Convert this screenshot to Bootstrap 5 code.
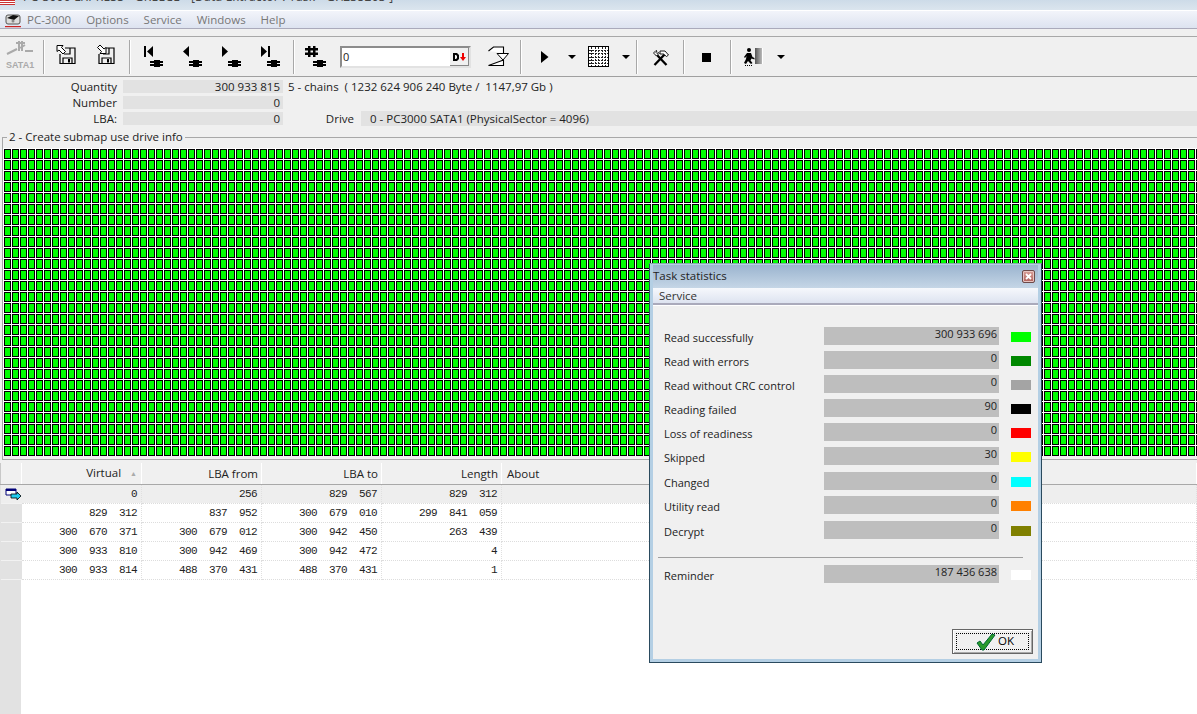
<!DOCTYPE html>
<html lang="en">
<head>
<meta charset="utf-8">
<title>PC-3000</title>
<link rel="stylesheet" href="https://cdn.jsdelivr.net/npm/bootstrap@5.3.0/dist/css/bootstrap.min.css">
<style>
html,body{height:100%;}
body{width:1197px;height:714px;overflow:hidden;background:#f0f0f0;color:#222;font:11px/14px "Open Sans",sans-serif;position:relative;}
.wtitle{height:10px;background:linear-gradient(#cddbe8,#dbe5ee);overflow:hidden;white-space:nowrap;color:#444;font-size:12px;}
.wtitle svg{flex:none;}
.wtitle span{display:block;margin-top:-10px;padding-left:8px;letter-spacing:.25px;}
.wedge{height:1px;background:#fff;}
.wmenu{height:18px;padding-left:5px;background:linear-gradient(#f2f4fa,#dde3f0);color:#777;border-bottom:1px solid #aab;font-size:11.5px;}
.wmenu svg{margin-right:6px;flex:none;}
.mi{margin-right:15px;}
.wgap{height:8px;border-bottom:1px solid #a8a8a8;}
.tbar{height:40px;padding-top:3px;border-bottom:1px solid #a0a0a0;}
.tbar .ico{flex:none;display:block;height:34px;}
.tsep{width:2px;height:34px;background:#a8a8a8;border-right:1px solid #fff;flex:none;}
.g5{margin-left:5px}.g6{margin-left:6px}.g8{margin-left:8px}.g10{margin-left:10px}.g11{margin-left:11px}.g12{margin-left:12px}.g13{margin-left:13px}.g14{margin-left:14px}.g15{margin-left:15px}.g17{margin-left:17px}.g18{margin-left:18px}.g19{margin-left:19px}
.numbox{width:131px;height:22px;margin-top:6px;background:#fff;border:2px solid #8c8c8c;border-right-color:#e2e2e2;border-bottom-color:#e2e2e2;font:11px/18px "Open Sans",sans-serif;padding-left:1px;flex:none;}
.numbtn{width:19px;height:18px;background:#f0f0f0;border-right:1px solid #888;border-bottom:1px solid #888;}
.ibox{height:55px;padding-top:2px;}
.irow{height:16px;}
.ilab{width:117px;text-align:right;margin-right:6px;line-height:16px;font-size:11.5px;}
.ival{width:160px;height:13px;margin-top:1px;background:#e2e2e2;text-align:right;padding-right:3px;line-height:13px;font-size:11.5px;}
.ichain{margin-left:5px;line-height:16px;white-space:pre;font-size:11.5px;}
.idrive{width:71px;text-align:right;line-height:15px;font-size:11.5px;}
.dval{flex:1;height:15px;margin-left:7px;background:#e2e2e2;padding-left:9px;line-height:15px;white-space:pre;font-size:11.5px;}
.gbox{height:323px;margin:5px 0 0 2px;border:1px solid #a8a8a8;border-right:0;position:relative;padding:10px 0 0 0;}
.gleg{position:absolute;left:4px;top:-8px;background:#f0f0f0;padding:0 2px;line-height:14px;font-size:11.5px;}
.cells{height:308px;background-color:#0f0;background-image:linear-gradient(90deg,#fff 1px,transparent 1px),linear-gradient(#fff 1px,transparent 1px),linear-gradient(90deg,#000 2px,transparent 2px,transparent 7px,#000 7px),linear-gradient(#000 2px,transparent 2px,transparent 10px,#000 10px);background-size:8px 11px;margin-top:0;}
.gridwrap{height:251px;margin-top:3px;background:#fff;position:relative;overflow:hidden;}
.gridwrap::before{content:"";position:absolute;left:0;top:0;bottom:0;width:21px;background:#e2e2e2;}
.dtab{width:1197px;table-layout:fixed;border-collapse:collapse;position:relative;}
.c0{width:21px}.cn{width:120px}
.dtab th{height:21px;padding:0 3px 0 0;background:#f0f0f0;font-weight:400;font-size:11.5px;text-align:right;border-right:1px solid #fff;border-left:1px solid #c8c8c8;border-bottom:1px solid #a8a8a8;line-height:19px;}
.dtab th.lft{text-align:left;padding-left:5px;}
.dtab td{height:19px;padding:0 4px 0 0;text-align:right;font:11px/18px "Liberation Mono",monospace;letter-spacing:-.6px;white-space:pre;border-right:1px dotted #e0e0e0;border-bottom:1px dotted #ddd;color:#222;}
.dtab td.rh{background:#e2e2e2;border-bottom:1px solid #f2f2f2;border-right:0;padding:0;}
.dtab tr.cur td{background:#eee;}
.arrowsort{color:#aaa;font-size:7px;margin:0 1px 0 9px;vertical-align:1px;}
.tstat{position:absolute;left:649px;top:263px;width:393px;height:400px;background:#f0f0f0;border:1px solid #2a4a5e;border-top-color:#8aa;box-shadow:inset 0 0 0 3px #b4cfe4;padding:0 4px 4px;}
.thead{height:23px;margin:1px -1px 0 -1px;background:linear-gradient(#9bb4cf,#c5d6e6);padding:3px 0 0 0;position:relative;line-height:16px;font-size:11.5px;}
.xbtn{position:absolute;right:3px;top:5px;width:13px;height:13px;background:linear-gradient(#d9a09a,#b0605a);border:1px solid #6d4a4a;border-radius:2px;box-shadow:inset 0 0 0 1px #e6c4c0;display:flex;}
.tmenu{height:17px;margin:0 -1px;padding-left:6px;background:linear-gradient(#f6f8fc,#dde3f0);line-height:15px;border-bottom:2px solid #aab;color:#333;box-shadow:0 1px 0 #fff;font-size:11.5px;}
.tbody{padding:22px 0 0 10px;height:calc(100% - 40px);position:relative;}
.strow{height:18px;margin-bottom:6px;}
.strow.wide{margin-bottom:7px;}
.slab{width:160px;line-height:14px;padding-top:4px;flex:none;}
.sval{width:175px;height:18px;background:#bebebe;text-align:right;padding-right:2px;line-height:14px;flex:none;}
.swat{width:20px;height:10px;margin-left:12px;margin-top:5px;flex:none;}
.shr{height:1px;background:#a0a0a0;margin:18px 14px 7px -6px;}
.okb{position:absolute;right:4px;bottom:5px;width:81px;height:25px;background:#f0f0f0;border:1px solid #666;box-shadow:inset 1px 1px 0 #fff,inset -1px -1px 0 #aaa;font:11.5px/20px "Open Sans",sans-serif;}
.okb i{display:block;position:absolute;inset:3px;border:1px dotted #000;}
.okb svg{position:absolute;left:23px;top:3px;}
.okb span{position:absolute;left:45px;top:1px;}
</style>
</head>
<body>
<svg width="0" height="0" class="d-block position-absolute"><defs>
<g id="lines"><rect x="7" y="21" width="13" height="2"/><rect x="7" y="24" width="13" height="2"/><rect x="11" y="20" width="6" height="7"/></g>
<linearGradient id="rg"><stop offset="0" stop-color="#555"/><stop offset="1" stop-color="#bbb"/></linearGradient>
</defs></svg>
<div class="wtitle d-flex"><svg width="15" height="10" viewBox="0 0 15 10"><rect width="15" height="5" fill="#c33"/><path d="M0 1.5h15M0 3.5h15" stroke="#fff"/></svg><span>PC-3000 EXPRESS - GREECE - [Data Extractor : Task - G:\235203 ]</span></div>
<div class="wedge"></div>
<nav class="wmenu d-flex align-items-center">
<svg width="16" height="16" viewBox="0 0 16 16"><rect x="1" y="3" width="14" height="9" rx="2" fill="#ddd" stroke="#555"/><path d="M2 6l6-3 6 1-5 4z" fill="#111"/><circle cx="8" cy="9" r="1.5" fill="#888"/><rect y="14" width="16" height="1.2" fill="#c22"/></svg>
<span class="mi">PC-3000</span><span class="mi">Options</span><span class="mi">Service</span><span class="mi">Windows</span><span class="mi">Help</span>
</nav>
<div class="wgap"></div>
<div class="tbar d-flex align-items-start">
<svg class="ico g5" width="30" viewBox="0 0 30 34"><path d="M2 14L12 9M15 8L20 5" stroke="#aaa" stroke-width="2" fill="none"/><path d="M14 1v10M17 1v10M11 3h9M20 11h8" stroke="#aaa" stroke-width="2" fill="none"/><text x="1" y="28" font-family="Liberation Sans" font-weight="700" font-size="9" fill="#aaa">SATA1</text></svg>
<div class="tsep g8"></div>
<svg class="ico g11" width="20" viewBox="0 0 20 34"><g fill="none" stroke="#000" stroke-width="1.2"><path d="M4 14v9.500h15V8H9M7 23v-5h9v5M8 14h6V8.500"/></g><rect x="12" y="19" width="2" height="3.500"/><path d="M1 5.500h6l-1.500 2 4 4-2.500 2.500-4-4L1 11.500z" fill="#fff" stroke="#000"/></svg>
<svg class="ico g19" width="20" viewBox="0 0 20 34"><g fill="none" stroke="#000" stroke-width="1.2"><path d="M4 14v9.500h15V8H11M7 23v-5h9v5M8 14h6V8.500"/></g><rect x="12" y="19" width="2" height="3.500"/><path d="M11 13.500H5l1.500-2-4-4L5 5l4 4 2-1.500z" fill="#fff" stroke="#000"/></svg>
<div class="tsep g14"></div>
<svg class="ico g12" width="21" viewBox="0 0 21 34"><path d="M1 6h2v11H1zM10 6v11L4 11.500z"/><use href="#lines"/></svg>
<svg class="ico g18" width="21" viewBox="0 0 21 34"><path d="M7 6v11L1 11.500z"/><use href="#lines"/></svg>
<svg class="ico g18" width="21" viewBox="0 0 21 34"><path d="M1 6v11l6-5.500z"/><use href="#lines"/></svg>
<svg class="ico g18" width="21" viewBox="0 0 21 34"><path d="M1 6v11l6-5.500zM8 6h2v11H8z"/><use href="#lines"/></svg>
<div class="tsep g12"></div>
<svg class="ico g10" width="21" viewBox="0 0 21 34"><path d="M3 6h2.500v11H3zM8 6h2.500v11H8zM0 8h13v2.500H0zM0 12.500h13V15H0z"/><g transform="translate(1)"><use href="#lines"/></g></svg>
<div class="numbox g14 d-flex justify-content-between"><span>0</span><span class="numbtn d-flex align-items-center justify-content-center"><svg width="15" height="10" viewBox="0 0 15 10"><path fill-rule="evenodd" d="M1 1h4l2 2v4L5 9H1zM3 3v4h1l1-1V4L4 3z"/><path d="M10 1h2v4h2l-3 4-3-4h2z" fill="#e00"/></svg></span></div>
<svg class="ico g17" width="21" viewBox="0 0 21 34"><path d="M.5 11L5.500 7H15.500V13M15.500 20V25.500H.5Z" fill="#fff" stroke="#000" stroke-width="1.1"/><path d="M9 13.500H20.500L15 20z" fill="#fff" stroke="#000"/></svg>
<div class="tsep g11"></div>
<svg class="ico g19" width="8" viewBox="0 0 8 34"><path d="M0 11l7.500 6L0 23z"/></svg>
<svg class="ico g19" width="8" viewBox="0 0 8 34"><path d="M0 15h8l-4 4z"/></svg>
<svg class="ico g12" width="21" viewBox="0 0 21 34"><rect x=".5" y="6.500" width="20" height="20" fill="#fff" stroke="#000"/><path d="M3.500 7v19M7 7v19M10.500 7v19M14 7v19M17.500 7v19M1 10h19M1 13.500h19M1 17h19M1 20h19M1 23.500h19" stroke="#222" stroke-dasharray="2 1" shape-rendering="crispEdges"/></svg>
<svg class="ico g13" width="8" viewBox="0 0 8 34"><path d="M0 15h8l-4 4z"/></svg>
<div class="tsep g6"></div>
<svg class="ico g15" width="16" viewBox="0 0 16 34"><path d="M1.500 25L12 14M13.500 25L3 14" stroke="#000" stroke-width="2.300"/><path d="M7 11h5l3.500 4-2 1.500-3-2.500H7z" fill="#fff" stroke="#000" stroke-width=".9"/><path d="M.5 13l2.500-2.500 1 .5-1 1.500 1 1 1.500-1 .5 1-2.500 2.500z" fill="#fff" stroke="#000" stroke-width=".9"/></svg>
<div class="tsep g14"></div>
<svg class="ico g17" width="9" viewBox="0 0 9 34"><rect y="13" width="9" height="9"/></svg>
<div class="tsep g19"></div>
<svg class="ico g11" width="20" viewBox="0 0 20 34"><rect x="12" y="8" width="7" height="16" fill="url(#rg)"/><path d="M19.500 8v16" stroke="#fff"/><circle cx="6" cy="10" r="2"/><path d="M4 13h4l1.500 4 2 1v1.500l-3-1-1 2 2 2.500-1.500 1-3-3-2 3L1 23l2-4 .5-3-1.500 2-1-1z"/><path d="M2 25.500h7" stroke="#000" stroke-dasharray="1 1"/></svg>
<svg class="ico g14" width="8" viewBox="0 0 8 34"><path d="M0 15h8l-4 4z"/></svg>
</div>
<div class="ibox">
<div class="irow d-flex"><div class="ilab">Quantity</div><div class="ival">300 933 815</div><div class="ichain">5 - chains  ( 1232 624 906 240 Byte /  1147,97 Gb )</div></div>
<div class="irow d-flex"><div class="ilab">Number</div><div class="ival">0</div></div>
<div class="irow d-flex"><div class="ilab">LBA:</div><div class="ival">0</div><div class="idrive">Drive</div><div class="dval">0 - PC3000 SATA1 (PhysicalSector = 4096)</div></div>
</div>
<div class="gbox"><div class="gleg">2 - Create submap use drive info</div><div class="cells"></div></div>
<div class="gridwrap">
<table class="dtab">
<colgroup><col class="c0"><col class="cn"><col class="cn"><col class="cn"><col class="cn"><col></colgroup>
<thead><tr><th></th><th>Virtual<span class="arrowsort">▲</span></th><th>LBA from</th><th>LBA to</th><th>Length</th><th class="lft">About</th></tr></thead>
<tbody>
<tr class="cur"><td class="rh"><svg class="d-block ms-1" width="17" height="12" viewBox="0 0 17 12"><path d="M1 1h10v6H1z" fill="#fff" stroke="#007"/><path d="M1 1h10v2H1z" fill="#007"/><path d="M6 6h6V4l4 4-4 4v-2H6z" fill="#2ce" stroke="#000" stroke-width=".8"/></svg></td><td>0</td><td>256</td><td>829  567</td><td>829  312</td><td></td></tr>
<tr><td class="rh"></td><td>829  312</td><td>837  952</td><td>300  679  010</td><td>299  841  059</td><td></td></tr>
<tr><td class="rh"></td><td>300  670  371</td><td>300  679  012</td><td>300  942  450</td><td>263  439</td><td></td></tr>
<tr><td class="rh"></td><td>300  933  810</td><td>300  942  469</td><td>300  942  472</td><td>4</td><td></td></tr>
<tr><td class="rh"></td><td>300  933  814</td><td>488  370  431</td><td>488  370  431</td><td>1</td><td></td></tr>
</tbody>
</table>
</div>
<section class="tstat">
<div class="thead">Task statistics<span class="xbtn"><svg width="11" height="11" viewBox="0 0 11 11"><path d="M3 3l5 5M8 3l-5 5" stroke="#fff" stroke-width="1.800"/></svg></span></div>
<div class="tmenu">Service</div>
<div class="tbody">
<div class="strow d-flex"><div class="slab">Read successfully</div><div class="sval">300 933 696</div><div class="swat" style="background:#0f0"></div></div>
<div class="strow d-flex"><div class="slab">Read with errors</div><div class="sval">0</div><div class="swat" style="background:#080"></div></div>
<div class="strow d-flex"><div class="slab">Read without CRC control</div><div class="sval">0</div><div class="swat" style="background:#a4a4a4"></div></div>
<div class="strow d-flex"><div class="slab">Reading failed</div><div class="sval">90</div><div class="swat" style="background:#000"></div></div>
<div class="strow d-flex"><div class="slab">Loss of readiness</div><div class="sval">0</div><div class="swat" style="background:#f00"></div></div>
<div class="strow wide d-flex"><div class="slab">Skipped</div><div class="sval">30</div><div class="swat" style="background:#ff0"></div></div>
<div class="strow d-flex"><div class="slab">Changed</div><div class="sval">0</div><div class="swat" style="background:#0ff"></div></div>
<div class="strow wide d-flex"><div class="slab">Utility read</div><div class="sval">0</div><div class="swat" style="background:#ff8000"></div></div>
<div class="strow d-flex"><div class="slab">Decrypt</div><div class="sval">0</div><div class="swat" style="background:#808000"></div></div>
<div class="shr"></div>
<div class="strow d-flex"><div class="slab">Reminder</div><div class="sval">187 436 638</div><div class="swat" style="background:#fff"></div></div>
<button class="okb p-0" type="button"><i></i><svg width="20" height="18" viewBox="0 0 20 18"><path d="M1 10l3-2 3 4 9-11 3 1-11 15H6z" fill="#2a9a2a" stroke="#063"/></svg><span>OK</span></button>
</div>
</section>
</body>
</html>
